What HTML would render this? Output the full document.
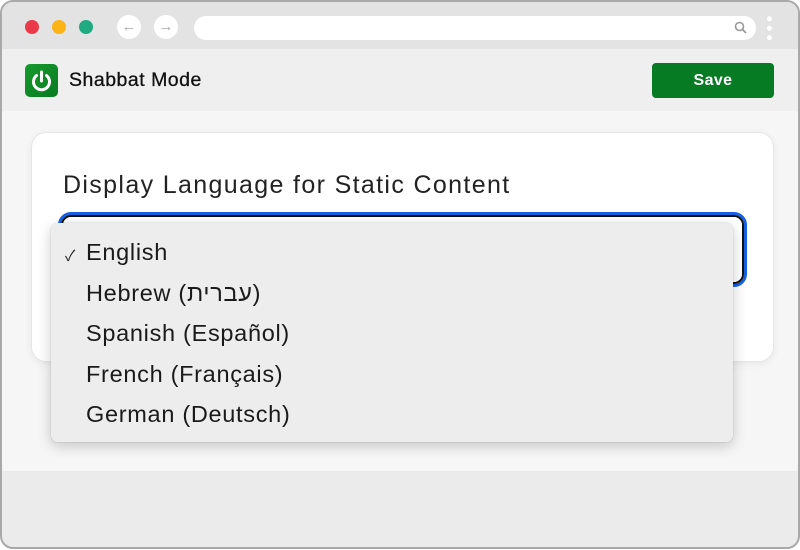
<!DOCTYPE html>
<html><head><meta charset="utf-8"><style>
*{box-sizing:border-box;margin:0;padding:0}
body{width:800px;height:550px;background:#fff;font-family:"Liberation Sans","Noto Sans CJK JP",sans-serif;overflow:hidden}
.win{position:absolute;left:0;top:0;width:800px;height:549px;border:2px solid #a9a9a9;border-radius:13px;overflow:hidden;background:#ebebeb}
.tb{position:absolute;left:0;top:0;right:0;height:47px;background:#e3e3e3}
.dot{position:absolute;top:18px;width:14px;height:14px;border-radius:50%}
.nav{position:absolute;top:13px;width:24px;height:24px;border-radius:50%;background:#fff;color:#aaa;font-size:15px;text-align:center;line-height:23px}
.url{position:absolute;left:192px;top:14px;width:562px;height:24px;border-radius:12px;background:#fff}
.hd{position:absolute;left:0;top:47px;right:0;height:62px;background:#efefef}
.logo{position:absolute;left:23px;top:15px;width:33px;height:33px;border-radius:5px;background:linear-gradient(135deg,#169a2d,#0a7a22)}
.ttl{position:absolute;left:67px;top:20px;font-size:19.5px;color:#111;letter-spacing:.5px;-webkit-text-stroke:.3px #111}
.save{position:absolute;left:650px;top:14px;width:122px;height:35px;border-radius:4px;background:#077a24;color:#fff;font-weight:bold;font-size:16px;text-align:center;line-height:35px;letter-spacing:.4px}
.ct{position:absolute;left:0;top:109px;right:0;height:360px;background:#f6f6f6}
.card{position:absolute;left:29px;top:21px;width:743px;height:230px;background:#fff;border:1px solid #e6e6e6;border-radius:15px;box-shadow:0 2px 8px rgba(0,0,0,.06)}
.lbl{position:absolute;left:31px;top:38px;font-size:25px;color:#222;letter-spacing:1.35px}
.sel{position:absolute;left:26px;top:79px;width:689px;height:75px;border:3px solid #1761e0;border-radius:13px}
.sel i{position:absolute;inset:0;border:2px solid #111;border-radius:10px;outline:2px solid #fff;outline-offset:-4px}
.dd{position:absolute;left:51px;top:223px;width:682px;height:219px;background:#ededed;border-radius:7px;box-shadow:0 4px 14px rgba(0,0,0,.2),0 0 0 1px rgba(0,0,0,.05)}
.it{position:absolute;left:35px;font-size:23.5px;color:#1a1a1a;letter-spacing:.7px}
.ck{position:absolute;left:14px;top:22px;font-size:15px;color:#222}
</style></head><body>
<div class="win">
<div class="tb">
<div class="dot" style="left:23px;background:#ea3a4a"></div>
<div class="dot" style="left:50px;background:#fcb316"></div>
<div class="dot" style="left:77px;background:#1faa82"></div>
<div class="nav" style="left:115px">&#8592;</div>
<div class="nav" style="left:152px">&#8594;</div>
<div class="url"><svg style="position:absolute;right:8px;top:5px" width="14" height="14" viewBox="0 0 14 14"><circle cx="5.5" cy="5.5" r="4" fill="none" stroke="#999" stroke-width="1.6"/><path d="M8.5 8.5L12 12" stroke="#999" stroke-width="1.8"/></svg></div>
<div style="position:absolute;left:765px;top:12px;width:5px;height:28px;background:radial-gradient(circle,#fff 2.3px,transparent 2.6px) 0 0/5px 9.5px"></div>
</div>
<div class="hd">
<div class="logo"><svg width="33" height="33" viewBox="0 0 33 33"><path d="M11.5 11.5a8 8 0 1 0 10 0" fill="none" stroke="#fff" stroke-width="3" stroke-linecap="round"/><path d="M16.5 8v9" stroke="#fff" stroke-width="3" stroke-linecap="round"/></svg></div>
<div class="ttl">Shabbat Mode</div>
<div class="save">Save</div>
</div>
<div class="ct">
<div class="card"><div class="lbl">Display Language for Static Content</div><div class="sel"><i></i></div></div>
</div>
</div>
<div class="dd">
<span class="ck">&#10003;</span>
<div class="it" style="top:16px">English</div>
<div class="it" style="top:57px">Hebrew (עברית)</div>
<div class="it" style="top:97px">Spanish (Español)</div>
<div class="it" style="top:138px">French (Français)</div>
<div class="it" style="top:178px">German (Deutsch)</div>
</div>
</body></html>
